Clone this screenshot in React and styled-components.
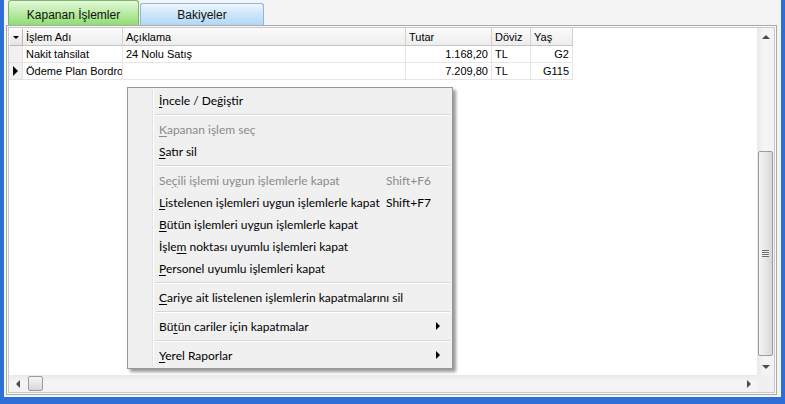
import React from 'react';
import styled, { createGlobalStyle } from 'styled-components';

const GlobalStyle = createGlobalStyle`
  html, body {
    margin: 0;
    padding: 0;
    background: #f4f4f4;
  }
  body {
    font-family: "Liberation Sans", Arial, sans-serif;
  }
`;

const Window = styled.div`
  position: relative;
  width: 785px;
  height: 404px;
  box-sizing: border-box;
  background: #f4f4f4;
  border-left: 4px solid #2d6fd6;
  border-right: 4px solid #2d6fd6;
  border-bottom: 7px solid #2d6fd6;
  display: flex;
  flex-direction: column;
  overflow: hidden;
`;

const TabBar = styled.div`
  height: 25px;
  display: flex;
  align-items: flex-end;
  padding-left: 4px;
  gap: 1px;
`;

const Tab = styled.div`
  box-sizing: border-box;
  width: ${({ $active }) => ($active ? '131px' : '124px')};
  height: ${({ $active }) => ($active ? '25px' : '22px')};
  border: 1px solid ${({ $active }) => ($active ? '#79b866' : '#8cb6dd')};
  border-bottom: none;
  border-radius: 3px 3px 0 0;
  background: ${({ $active }) =>
    $active
      ? 'linear-gradient(#e6f8de 0%, #c6efb4 35%, #8fdd72 100%)'
      : 'linear-gradient(#eef6fd 0%, #d3e8fa 40%, #b3d7f6 100%)'};
  display: flex;
  align-items: center;
  justify-content: center;
  padding-top: ${({ $active }) => ($active ? '3px' : '1px')};
  font-size: 12px;
  color: #111;
`;

const Panel = styled.div`
  flex: 1;
  margin: 0 4px 2px 2px;
  border: 1px solid #a9a9a9;
  padding: 1px;
  background: #fafafa;
  display: flex;
`;

const Inner = styled.div`
  flex: 1;
  border: 1px solid #c9c9c9;
  display: grid;
  grid-template-columns: 1fr 17px;
  grid-template-rows: 1fr 17px;
  background: #fff;
`;

const GridArea = styled.div`
  background: #fff;
  overflow: hidden;
`;

const Row = styled.div`
  display: flex;
  height: ${({ $head }) => ($head ? '18px' : '17px')};
`;

const Cell = styled.div`
  box-sizing: border-box;
  width: ${({ $w }) => $w}px;
  flex: none;
  height: 100%;
  padding: 0 3px;
  display: flex;
  align-items: center;
  justify-content: ${({ $align }) => ($align === 'right' ? 'flex-end' : 'flex-start')};
  font-size: 11px;
  color: #000;
  white-space: nowrap;
  overflow: hidden;
  border-right: 1px solid ${({ $head }) => ($head ? '#d2d2d2' : '#e6e6e6')};
  border-bottom: 1px solid ${({ $head }) => ($head ? '#c4c4c4' : '#e6e6e6')};
  background: ${({ $head }) => ($head ? 'linear-gradient(#fbfbfb, #ededed)' : '#fff')};
`;

const Indicator = styled.div`
  box-sizing: border-box;
  width: 14px;
  flex: none;
  height: 100%;
  display: flex;
  align-items: center;
  justify-content: center;
  background: #f1f1f1;
  border-right: 1px solid #e2e2e2;
  border-bottom: 1px solid #e2e2e2;
`;

const HeadButton = styled.div`
  box-sizing: border-box;
  width: 14px;
  flex: none;
  height: 100%;
  display: flex;
  align-items: center;
  justify-content: center;
  background: linear-gradient(#fdfdfd, #e4e4e4);
  border: 1px solid #b9b9b9;
  border-top-color: #fff;
  border-left-color: #fff;
`;

const VScroll = styled.div`
  display: flex;
  flex-direction: column;
  background: linear-gradient(90deg, #e9e9e9, #f5f5f5 40%, #f2f2f2);
`;

const HScroll = styled.div`
  display: flex;
  background: linear-gradient(#e9e9e9, #f5f5f5 40%, #f2f2f2);
`;

const Corner = styled.div`
  background: #f0f0f0;
`;

const ArrowBox = styled.div`
  width: 17px;
  height: 17px;
  flex: none;
  display: flex;
  align-items: center;
  justify-content: center;
`;

const Track = styled.div`
  flex: 1;
  display: flex;
  flex-direction: ${({ $vertical }) => ($vertical ? 'column' : 'row')};
  padding: ${({ $vertical }) => ($vertical ? '0' : '0 0 0 2px')};
`;

const Thumb = styled.div`
  box-sizing: border-box;
  flex: none;
  border: 1px solid #9b9b9b;
  border-radius: 2px;
  display: flex;
  align-items: center;
  justify-content: center;
  ${({ $vertical }) =>
    $vertical
      ? `
    width: 15px;
    margin-left: 1px;
    background: linear-gradient(90deg, #f4f4f4, #e8e8e8 50%, #d6d6d6);
  `
      : `
    height: 15px;
    margin-top: 1px;
    background: linear-gradient(#f4f4f4, #e8e8e8 50%, #d6d6d6);
  `}
`;

const Grip = styled.div`
  width: 7px;
  height: 7px;
  background: repeating-linear-gradient(#6d6d6d 0 1px, #f4f4f4 1px 2px);
`;

const Menu = styled.div`
  position: absolute;
  left: 123px;
  top: 87px;
  width: 326px;
  box-sizing: border-box;
  border: 1px solid #979797;
  background: #f0f0f0;
  padding: 1px 2px 2px 2px;
  box-shadow: 3px 3px 3px rgba(0, 0, 0, 0.4);
  font-family: Lato, "Liberation Sans", sans-serif;
  font-size: 12px;
  &::before {
    content: '';
    position: absolute;
    left: 24px;
    top: 1px;
    bottom: 1px;
    width: 1px;
    background: #e2e3e3;
    box-shadow: 1px 0 0 #fff;
  }
`;

const Item = styled.div`
  height: 22px;
  display: flex;
  align-items: center;
  padding-left: 29px;
  color: ${({ $disabled }) => ($disabled ? '#8a8a8a' : '#000')};
`;

const Label = styled.span`
  flex: 1;
  white-space: nowrap;
`;

const Shortcut = styled.span`
  width: 50px;
  flex: none;
  white-space: nowrap;
`;

const SubArrow = styled.span`
  width: 14px;
  flex: none;
  display: flex;
  align-items: center;
  justify-content: flex-start;
`;

const Acc = styled.u`
  text-decoration: underline;
  text-underline-offset: 2px;
`;

const Separator = styled.div`
  height: 7px;
  display: flex;
  align-items: center;
  padding-left: 26px;
  &::after {
    content: '';
    flex: 1;
    height: 1px;
    background: #d7d7d7;
    box-shadow: 0 1px 0 #fff;
  }
`;

const Tri = ({ dir, size = 4, color = '#333' }) => {
  const pts = {
    up: `0,${size} ${size * 2},${size} ${size},0`,
    down: `0,0 ${size * 2},0 ${size},${size}`,
    left: `${size},0 ${size},${size * 2} 0,${size}`,
    right: `0,0 0,${size * 2} ${size},${size}`,
  }[dir];
  const vertical = dir === 'up' || dir === 'down';
  return (
    <svg width={vertical ? size * 2 : size} height={vertical ? size : size * 2}>
      <polygon points={pts} fill={color} />
    </svg>
  );
};

const columns = [
  { key: 'name', title: 'İşlem Adı', w: 100 },
  { key: 'desc', title: 'Açıklama', w: 283 },
  { key: 'amount', title: 'Tutar', w: 86, align: 'right' },
  { key: 'cur', title: 'Döviz', w: 39 },
  { key: 'age', title: 'Yaş', w: 42, align: 'right' },
];

const rows = [
  { name: 'Nakit tahsilat', desc: '24 Nolu Satış', amount: '1.168,20', cur: 'TL', age: 'G2' },
  { name: 'Ödeme Plan Bordrosu', desc: '', amount: '7.209,80', cur: 'TL', age: 'G115', current: true },
];

const menu = [
  { label: ['', 'İ', 'ncele / Değiştir'] },
  { sep: true },
  { label: ['', 'K', 'apanan işlem seç'], disabled: true },
  { label: ['', 'S', 'atır sil'] },
  { sep: true },
  { label: ['Se', 'ç', 'ili işlemi uygun işlemlerle kapat'], disabled: true, shortcut: 'Shift+F6' },
  { label: ['', 'L', 'istelenen işlemleri uygun işlemlerle kapat'], shortcut: 'Shift+F7' },
  { label: ['', 'B', 'ütün işlemleri uygun işlemlerle kapat'] },
  { label: ['İşle', 'm', ' noktası uyumlu işlemleri kapat'] },
  { label: ['', 'P', 'ersonel uyumlu işlemleri kapat'] },
  { sep: true },
  { label: ['', 'C', 'ariye ait listelenen işlemlerin kapatmalarını sil'] },
  { sep: true },
  { label: ['Bü', 't', 'ün cariler için kapatmalar'], sub: true },
  { sep: true },
  { label: ['', 'Y', 'erel Raporlar'], sub: true },
];

export default function App() {
  return (
    <>
      <GlobalStyle />
      <Window>
        <TabBar>
          <Tab $active>Kapanan İşlemler</Tab>
          <Tab>Bakiyeler</Tab>
        </TabBar>
        <Panel>
          <Inner>
            <GridArea>
              <Row $head>
                <HeadButton>
                  <Tri dir="down" size={3} color="#000" />
                </HeadButton>
                {columns.map((c) => (
                  <Cell key={c.key} $w={c.w} $head>
                    {c.title}
                  </Cell>
                ))}
              </Row>
              {rows.map((r, i) => (
                <Row key={i}>
                  <Indicator>{r.current && <Tri dir="right" size={5} color="#000" />}</Indicator>
                  {columns.map((c) => (
                    <Cell key={c.key} $w={c.w} $align={c.align}>
                      {r[c.key]}
                    </Cell>
                  ))}
                </Row>
              ))}
            </GridArea>
            <VScroll>
              <ArrowBox>
                <Tri dir="up" size={4} color="#4a4a4a" />
              </ArrowBox>
              <Track $vertical>
                <Thumb $vertical style={{ marginTop: 106, height: 205 }}>
                  <Grip />
                </Thumb>
              </Track>
              <ArrowBox>
                <Tri dir="down" size={4} color="#4a4a4a" />
              </ArrowBox>
            </VScroll>
            <HScroll>
              <ArrowBox>
                <Tri dir="left" size={4} color="#4a4a4a" />
              </ArrowBox>
              <Track>
                <Thumb style={{ width: 15 }} />
              </Track>
              <ArrowBox>
                <Tri dir="right" size={4} color="#4a4a4a" />
              </ArrowBox>
            </HScroll>
            <Corner />
          </Inner>
        </Panel>
        <Menu>
          {menu.map((m, i) =>
            m.sep ? (
              <Separator key={i} />
            ) : (
              <Item key={i} $disabled={m.disabled}>
                <Label>
                  {m.label[0]}
                  <Acc>{m.label[1]}</Acc>
                  {m.label[2]}
                </Label>
                <Shortcut>{m.shortcut}</Shortcut>
                <SubArrow>{m.sub && <Tri dir="right" size={4} color="#000" />}</SubArrow>
              </Item>
            )
          )}
        </Menu>
      </Window>
    </>
  );
}
